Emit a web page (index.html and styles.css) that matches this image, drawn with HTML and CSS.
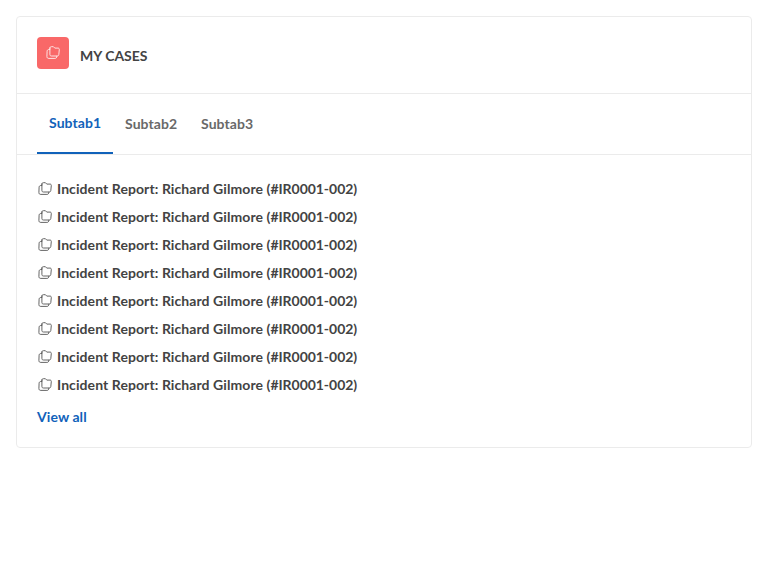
FILE: index.html
```html
<!DOCTYPE html>
<html lang="en">
<head>
<meta charset="utf-8">
<title>My Cases</title>
<link rel="stylesheet" href="styles.css">
</head>
<body>
<svg class="defs" width="0" height="0">
<symbol id="cases" viewBox="0 0 16 16" fill="none" stroke="currentColor" stroke-width=".9" stroke-linejoin="round" stroke-linecap="round">
<path d="M4.900 3.100v6.400c0 1 .6 1.500 1.600 1.500h5.600c1 0 1.600-.5 1.700-1.500l.5-4.900c.1-1-.4-1.500-1.300-1.500H9.800L8.400 1.700H6.400c-1 0-1.500.5-1.500 1.400z"/>
<path d="M4.800 4.500H3.900c-1.100 0-1.700.6-1.800 1.700l-.2 5.300c0 1.300.7 1.900 1.900 1.900h6.100c1.300 0 1.900-.7 2-2.200"/>
</symbol>
</svg>
<section class="card">
<header class="card-header">
<span class="badge"><svg class="icon"><use href="#cases"/></svg></span>
<h2 class="title">MY CASES</h2>
</header>
<nav class="tabs">
<a class="tab active">Subtab1</a>
<a class="tab">Subtab2</a>
<a class="tab">Subtab3</a>
</nav>
<div class="content">
<ul class="list">
<li class="item"><svg class="icon"><use href="#cases"/></svg><span>Incident Report: Richard Gilmore <span class="number">(#IR0001-002)</span></span></li>
<li class="item"><svg class="icon"><use href="#cases"/></svg><span>Incident Report: Richard Gilmore <span class="number">(#IR0001-002)</span></span></li>
<li class="item"><svg class="icon"><use href="#cases"/></svg><span>Incident Report: Richard Gilmore <span class="number">(#IR0001-002)</span></span></li>
<li class="item"><svg class="icon"><use href="#cases"/></svg><span>Incident Report: Richard Gilmore <span class="number">(#IR0001-002)</span></span></li>
<li class="item"><svg class="icon"><use href="#cases"/></svg><span>Incident Report: Richard Gilmore <span class="number">(#IR0001-002)</span></span></li>
<li class="item"><svg class="icon"><use href="#cases"/></svg><span>Incident Report: Richard Gilmore <span class="number">(#IR0001-002)</span></span></li>
<li class="item"><svg class="icon"><use href="#cases"/></svg><span>Incident Report: Richard Gilmore <span class="number">(#IR0001-002)</span></span></li>
<li class="item"><svg class="icon"><use href="#cases"/></svg><span>Incident Report: Richard Gilmore <span class="number">(#IR0001-002)</span></span></li>
</ul>
<a class="view-all">View all</a>
</div>
</section>
</body>
</html>
```
FILE: styles.css
```css
* { box-sizing: border-box; }
body { margin: 16px; background: #fff; font: 700 14px/20px Lato, sans-serif; letter-spacing: .08px; color: #434343; }
.defs { display: block; height: 0; }
.card { height: 432px; border: 1px solid #ebebeb; border-radius: 4px; }
.card-header { display: flex; height: 77px; padding: 20px; border-bottom: 1px solid #ebebeb; }
.badge { display: flex; align-items: center; justify-content: center; width: 32px; height: 32px; border-radius: 4px; background: #f96868; color: #fff; }
.icon { display: block; width: 16px; height: 16px; flex: none; opacity: .9; }
.title { margin: 9px 0 0 11px; font-size: 14px; line-height: 20px; letter-spacing: 0; }
.tabs { display: flex; height: 61px; padding: 0 20px; border-bottom: 1px solid #ebebeb; }
.tab { width: 76px; height: 60px; padding: 20px 12px; color: #696969; }
.tab.active { padding-top: 19px; border-bottom: 2px solid #1162ba; color: #1162ba; }
.content { padding: 20px; }
.list { margin: 0; padding: 0; list-style: none; }
.item { display: flex; align-items: center; gap: 4px; height: 28px; }
.number { letter-spacing: -.04px; }
.view-all { display: block; margin-top: 8px; color: #1162ba; }
```
